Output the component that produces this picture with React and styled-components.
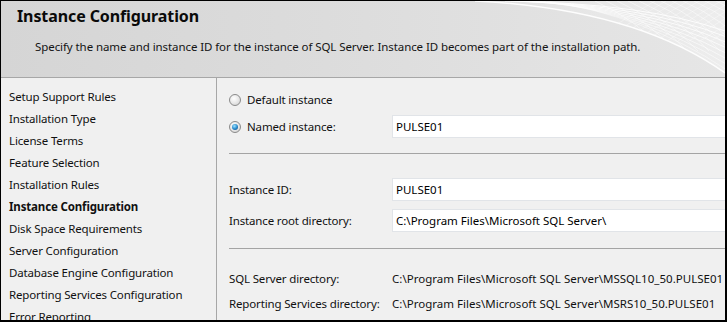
import React from "react";
import styled, { createGlobalStyle } from "styled-components";

const Global = createGlobalStyle`
  html, body { margin: 0; padding: 0; background: #f0f0f0; }
  * { box-sizing: border-box; }
`;

const Frame = styled.div`
  width: 727px;
  height: 322px;
  border: 1px solid #000;
  border-right-width: 2px;
  border-bottom-width: 2px;
  overflow: hidden;
  display: flex;
  flex-direction: column;
  background: #f0f0f0;
  font-family: "Noto Sans", "Open Sans", sans-serif;
  font-size: 11.5px;
  color: #111;
`;

const Header = styled.header`
  position: relative;
  height: 77px;
  flex: none;
  border-bottom: 1px solid #a7a7a7;
  background: linear-gradient(to right, #d5d5d5 0%, #dcdcdc 45%, #e6e6e6 100%);
  overflow: hidden;
`;

const Title = styled.h1`
  position: relative;
  margin: 0;
  padding: 3px 0 0 16px;
  font-size: 16px;
  font-weight: 700;
  line-height: 24px;
  color: #0a0a0a;
  letter-spacing: -0.1px;
`;

const Subtitle = styled.p`
  position: relative;
  margin: 11px 0 0 34px;
  line-height: 16px;
  letter-spacing: -0.08px;
  color: #141414;
`;

const Mesh = styled.svg`
  position: absolute;
  right: 0;
  top: 0;
`;

const Body = styled.div`
  flex: 1;
  display: flex;
  min-height: 0;
`;

const Nav = styled.nav`
  width: 216px;
  flex: none;
  border-right: 1px solid #a7a7a7;
  padding-top: 8px;
`;

const NavItem = styled.div`
  height: 22px;
  line-height: 22px;
  padding-left: 8px;
  letter-spacing: -0.15px;
  white-space: nowrap;
  font-weight: ${(p) => (p.$active ? 700 : 400)};
`;

const Content = styled.section`
  flex: 1;
  padding: 10px 0 0 12px;
  min-width: 0;
`;

const Row = styled.div`
  display: flex;
  align-items: center;
  height: ${(p) => p.$h || 23}px;
  margin-top: ${(p) => p.$mt || 0}px;
  white-space: nowrap;
`;

const RadioLabel = styled.label`
  display: flex;
  align-items: center;
  gap: 6px;
  width: 163px;
  flex: none;
  letter-spacing: -0.15px;
`;

const Radio = styled.span`
  width: 12px;
  height: 12px;
  flex: none;
  border-radius: 50%;
  border: 1px solid #8a8a8a;
  background: radial-gradient(circle at 40% 35%, #ffffff 0%, #e6e6e6 55%, #c9c9c9 100%);
  display: flex;
  align-items: center;
  justify-content: center;
  &::after {
    content: "";
    display: ${(p) => (p.$checked ? "block" : "none")};
    width: 6px;
    height: 6px;
    border-radius: 50%;
    background: radial-gradient(circle at 40% 35%, #9fe3ff 0%, #2c8fd0 50%, #0d3d73 100%);
  }
`;

const Label = styled.span`
  width: 163px;
  flex: none;
  letter-spacing: -0.15px;
`;

const Input = styled.div`
  flex: 1;
  height: 23px;
  background: #fff;
  border: 1px solid #e1e4e8;
  border-right: none;
  padding-left: 3px;
  line-height: 21px;
  letter-spacing: 0;
  color: #000;
`;

const Value = styled.span`
  letter-spacing: 0.02px;
`;

const Separator = styled.hr`
  margin: ${(p) => p.$mt}px 0 0 0;
  border: none;
  border-top: 1px solid #a4a4a4;
  height: 0;
`;

const navItems = [
  "Setup Support Rules",
  "Installation Type",
  "License Terms",
  "Feature Selection",
  "Installation Rules",
  "Instance Configuration",
  "Disk Space Requirements",
  "Server Configuration",
  "Database Engine Configuration",
  "Reporting Services Configuration",
  "Error Reporting",
];

function MeshArt() {
  const curves = [];
  for (let i = 0; i < 8; i++) {
    const o = i * 6;
    curves.push(
      <path
        key={"a" + i}
        d={`M ${30 + o} 0 Q ${170} ${2 + o * 0.3} ${250} ${30 + o * 0.9}`}
        stroke="#fff"
        strokeWidth="1"
        fill="none"
        opacity={0.85 - i * 0.06}
      />
    );
  }
  for (let i = 0; i < 12; i++) {
    const x = 120 + i * 11;
    curves.push(
      <path
        key={"b" + i}
        d={`M ${x} 0 Q ${x + 40} ${18} ${x + 70} ${50}`}
        stroke="#fff"
        strokeWidth="0.8"
        fill="none"
        opacity="0.6"
      />
    );
    curves.push(
      <path
        key={"c" + i}
        d={`M ${x + 60} 0 Q ${x + 30} ${18} ${x - 5} ${40}`}
        stroke="#fff"
        strokeWidth="0.8"
        fill="none"
        opacity="0.45"
      />
    );
  }
  return (
    <Mesh width="250" height="77" viewBox="0 0 250 77">
      <defs>
        <clipPath id="band">
          <path d="M 0 0 L 250 0 L 250 72 Q 160 8 0 0 Z" />
        </clipPath>
        <linearGradient id="fade" x1="0" x2="1" y1="0" y2="0">
          <stop offset="0" stopColor="#fff" stopOpacity="0" />
          <stop offset="0.5" stopColor="#fff" stopOpacity="0.5" />
          <stop offset="1" stopColor="#fff" stopOpacity="0.8" />
        </linearGradient>
      </defs>
      <g clipPath="url(#band)">
        <rect x="0" y="0" width="250" height="77" fill="url(#fade)" opacity="0.35" />
        {curves}
      </g>
      <path d="M 0 0 Q 160 8 250 72" stroke="#fff" strokeWidth="1.5" fill="none" opacity="0.9" />
    </Mesh>
  );
}

export default function App() {
  return (
    <>
      <Global />
      <Frame>
        <Header>
          <MeshArt />
          <Title>Instance Configuration</Title>
          <Subtitle>
            Specify the name and instance ID for the instance of SQL Server. Instance ID becomes part of the installation path.
          </Subtitle>
        </Header>
        <Body>
          <Nav>
            {navItems.map((n) => (
              <NavItem key={n} $active={n === "Instance Configuration"}>
                {n}
              </NavItem>
            ))}
          </Nav>
          <Content>
            <Row>
              <RadioLabel>
                <Radio />
                Default instance
              </RadioLabel>
            </Row>
            <Row $mt={4}>
              <RadioLabel>
                <Radio $checked />
                Named instance:
              </RadioLabel>
              <Input>PULSE01</Input>
            </Row>
            <Separator $mt={15} />
            <Row $mt={24} $h={22}>
              <Label>Instance ID:</Label>
              <Input>PULSE01</Input>
            </Row>
            <Row $mt={9} $h={23}>
              <Label>Instance root directory:</Label>
              <Input>C:\Program Files\Microsoft SQL Server\</Input>
            </Row>
            <Separator $mt={16} />
            <Row $mt={18} $h={22}>
              <Label>SQL Server directory:</Label>
              <Value>C:\Program Files\Microsoft SQL Server\MSSQL10_50.PULSE01</Value>
            </Row>
            <Row $mt={3} $h={22}>
              <Label>Reporting Services directory:</Label>
              <Value>C:\Program Files\Microsoft SQL Server\MSRS10_50.PULSE01</Value>
            </Row>
          </Content>
        </Body>
      </Frame>
    </>
  );
}
